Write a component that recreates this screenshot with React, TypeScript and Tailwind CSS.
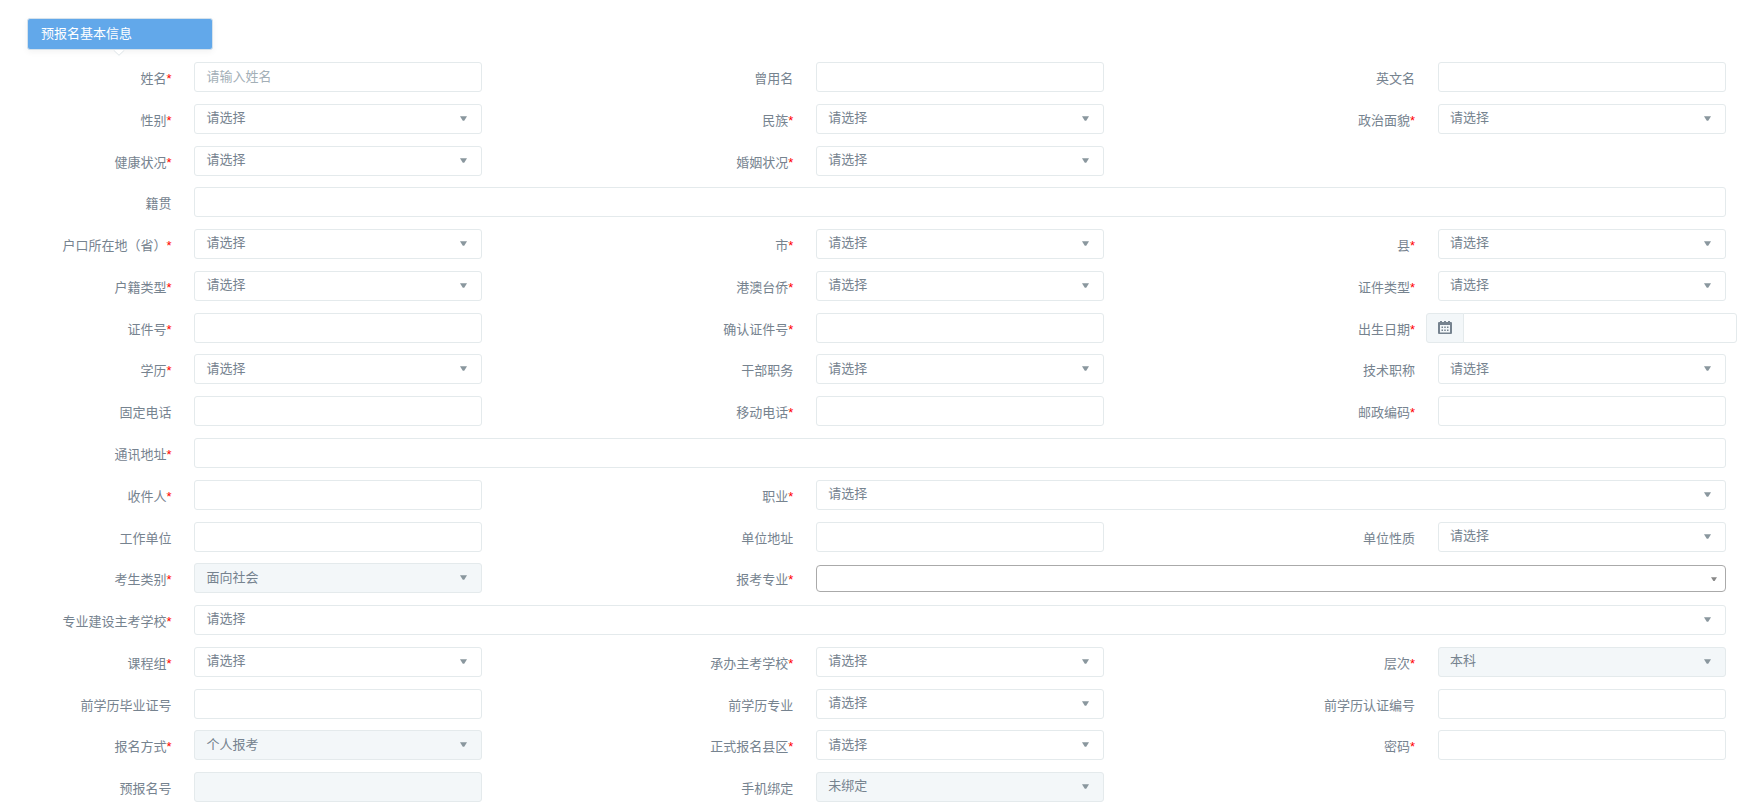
import { useId, type ReactNode } from 'react';

type Field = {
  label: string;
  required?: boolean;
  kind?: 'text' | 'select' | 'date' | 'combo';
  type?: string;
  value?: string;
  placeholder?: string;
  disabled?: boolean;
  span?: 'third' | 'two' | 'full';
};

const pick = (label: string, required = true): Field => ({ label, required, kind: 'select', value: '请选择' });
const text = (label: string, required = false): Field => ({ label, required, kind: 'text' });

const rows: Field[][] = [
  [{ ...text('姓名', true), placeholder: '请输入姓名' }, text('曾用名'), text('英文名')],
  [pick('性别'), pick('民族'), pick('政治面貌')],
  [pick('健康状况'), pick('婚姻状况')],
  [{ ...text('籍贯'), span: 'full' }],
  [pick('户口所在地（省）'), pick('市'), pick('县')],
  [pick('户籍类型'), pick('港澳台侨'), pick('证件类型')],
  [text('证件号', true), text('确认证件号', true), { label: '出生日期', required: true, kind: 'date' }],
  [pick('学历'), pick('干部职务', false), pick('技术职称', false)],
  [text('固定电话'), text('移动电话', true), text('邮政编码', true)],
  [{ ...text('通讯地址', true), span: 'full' }],
  [text('收件人', true), { ...pick('职业'), span: 'two' }],
  [text('工作单位'), text('单位地址'), pick('单位性质', false)],
  [
    { ...pick('考生类别'), value: '面向社会', disabled: true },
    { label: '报考专业', required: true, kind: 'combo', span: 'two' },
  ],
  [{ ...pick('专业建设主考学校'), span: 'full' }],
  [pick('课程组'), pick('承办主考学校'), { ...pick('层次'), value: '本科', disabled: true }],
  [text('前学历毕业证号'), pick('前学历专业', false), text('前学历认证编号')],
  [
    { ...pick('报名方式'), value: '个人报考', disabled: true },
    pick('正式报名县区'),
    { ...text('密码', true), type: 'password' },
  ],
  [
    { ...text('预报名号'), disabled: true },
    { ...pick('手机绑定', false), value: '未绑定', disabled: true },
  ],
];

const box =
  'block h-[30px] w-full rounded-[3px] border border-[#e4eaec] bg-white pb-[2px] pl-[11px] text-[13px] text-[#76838f] outline-none placeholder:text-[#a3afb7] placeholder:opacity-100 disabled:bg-[#f3f7f9] disabled:opacity-100';

const spans = { third: 'col-span-2', two: 'col-span-6', full: 'col-span-10' };

function Arrow({ className }: { className: string }) {
  return (
    <svg className={`pointer-events-none absolute ${className}`} viewBox="0 0 8 5" fill="currentColor" aria-hidden="true">
      <path d="M0 0h8L4.8 5H3.2z" />
    </svg>
  );
}

function CalendarIcon() {
  return (
    <svg className="h-[14px] w-[14px] text-[#76838f]" viewBox="0 0 14 14" aria-hidden="true">
      <path
        fill="currentColor"
        fillRule="evenodd"
        d="M1 1h1V0h2v1h2V0h2v1h2V0h2v1h1q1 0 1 1v10q0 1-1 1H1q-1 0-1-1V2q0-1 1-1zM2 4v7.5h10V4z"
      />
      <path
        fill="currentColor"
        d="M3.5 5.5H5V7H3.500zM6.250 5.500h1.500V7h-1.500zM9 5.500h1.500V7H9zM3.500 8.500H5V10H3.500zM6.250 8.500h1.500V10h-1.500zM9 8.500h1.500V10H9z"
      />
    </svg>
  );
}

function Cell({ className, children }: { className: string; children: ReactNode }) {
  return <div className={`min-w-0 ${className}`}>{children}</div>;
}

function FormField({ field, first }: { field: Field; first: boolean }) {
  const id = useId();
  const { label, required, kind = 'text', type = 'text', value, placeholder, disabled, span = 'third' } = field;
  return (
    <>
      <label
        htmlFor={id}
        className={`${first ? 'col-span-1' : 'col-span-2'} pt-[7px] pr-[11px] text-right text-[13px] leading-5 whitespace-nowrap text-[#76838f]`}
      >
        {label}
        {required && <span className="text-[#ff0000]">*</span>}
      </label>
      {kind === 'date' ? (
        <Cell className={`${spans[span]} flex h-[30px]`}>
          <span className="flex w-[38px] shrink-0 items-center justify-center rounded-l-[3px] border border-[#e4eaec] bg-[#f3f7f9]">
            <CalendarIcon />
          </span>
          <input id={id} type="text" className={`${box} -ml-px rounded-l-none`} />
        </Cell>
      ) : (
        <Cell className={`${spans[span]} pr-[11px] pl-3`}>
          {kind === 'text' && (
            <input id={id} type={type} placeholder={placeholder} disabled={disabled} className={box} />
          )}
          {kind === 'select' && (
            <div className="relative">
              <select id={id} disabled={disabled} className={`${box} appearance-none`}>
                <option>{value}</option>
              </select>
              <Arrow className="top-3 right-[15px] h-[5px] w-[7px] text-[#8a979e]" />
            </div>
          )}
          {kind === 'combo' && (
            <div className="relative pt-[2px]">
              <select
                id={id}
                className="block h-[27px] w-full appearance-none rounded-sm border border-[#aaaaaa] bg-white pl-2 text-[13px] outline-none"
              >
                <option></option>
              </select>
              <Arrow className="top-[14px] right-[9px] h-[4px] w-[6px] text-[#888888]" />
            </div>
          )}
        </Cell>
      )}
    </>
  );
}

export default function App() {
  return (
    <form className="flex min-h-screen flex-col bg-white pt-[18px] pr-2 pb-[9px] pl-[27px] font-['Liberation_Sans','Noto_Sans_CJK_SC',sans-serif]">
      <header className="relative mb-3 w-[186px]">
        <h1 className="relative h-8 rounded-[3px] border border-[#d5e2ec] bg-[#62a8ea] pl-[13px] text-[13px] leading-[30px] text-white shadow-[0_2px_6px_rgba(0,0,0,0.05)]">
          预报名基本信息
        </h1>
        <svg className="absolute top-8 left-[86px] h-[6px] w-3" viewBox="0 0 12 6" fill="#fff" aria-hidden="true">
          <path d="M0.5 0L6 5.300L11.500 0" stroke="#dde4e7" />
        </svg>
      </header>
      <div className="grid flex-1 auto-rows-fr gap-y-[11px]">
        {rows.map((row) => (
          <div key={row[0].label} className="grid grid-cols-11 items-start">
            {row.map((field, i) => (
              <FormField key={field.label} field={field} first={i === 0} />
            ))}
          </div>
        ))}
      </div>
    </form>
  );
}
